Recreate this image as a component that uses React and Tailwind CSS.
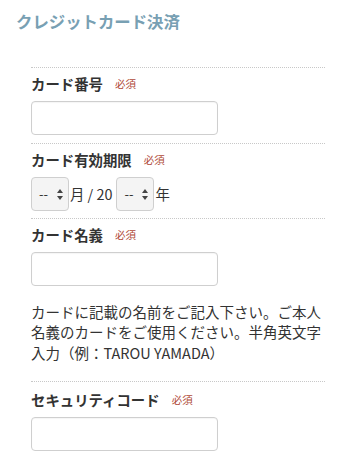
import React from "react";

const FONT = { fontFamily: '"Noto Sans CJK JP", "Noto Sans", sans-serif' };

function Required() {
  return (
    <span className="ml-[12px] text-[10.5px] font-normal text-[#b04a38]">必須</span>
  );
}

function Label({ children }) {
  return (
    <div className="mt-[6px] flex h-[20px] items-center text-[14.4px] font-bold leading-[20px] text-[#333]">
      <span>{children}</span>
      <Required />
    </div>
  );
}

function TextBox() {
  return (
    <div className="mt-[7px] h-[34px] w-[187px] rounded-[4px] border border-[#cfcfcf] bg-white shadow-[inset_0_1px_1px_rgba(0,0,0,0.04)]" />
  );
}

function SelectBox() {
  return (
    <div className="flex h-[34px] w-[38px] items-center justify-between rounded-[4px] border border-[#cfcfcf] bg-[#f4f4f4] pl-[7px] pr-[5px] text-[13px] text-[#333]">
      <span>--</span>
      <svg width="6" height="11" viewBox="0 0 6 11" fill="#444">
        <path d="M3 0 L6 4 L0 4 Z" />
        <path d="M0 7 L6 7 L3 11 Z" />
      </svg>
    </div>
  );
}

function Section({ children }) {
  return <div className="border-t border-dotted border-[#c8c8c8]">{children}</div>;
}

export default function App() {
  return (
    <div className="h-[460px] w-[360px] overflow-hidden bg-white" style={FONT}>
      <div className="pl-[16px] pt-[9px] text-[16.4px] font-bold leading-[24px] text-[#78a0b3]">
        クレジットカード決済
      </div>

      <div className="ml-[31px] mt-[34px] w-[294px]">
        <Section>
          <Label>カード番号</Label>
          <TextBox />
          <div className="h-[8px]" />
        </Section>

        <Section>
          <Label>カード有効期限</Label>
          <div className="mt-[7px] flex items-center text-[14.4px] text-[#333]">
            <SelectBox />
            <span className="ml-[1px]">月 / 20</span>
            <span className="ml-[4px]">
              <SelectBox />
            </span>
            <span className="ml-[1px]">年</span>
          </div>
          <div className="h-[7px]" />
        </Section>

        <Section>
          <Label>カード名義</Label>
          <TextBox />
          <p className="mt-[16px] text-[14.5px] leading-[20.3px] text-[#333]">
            カードに記載の名前をご記入下さい。ご本人名義のカードをご使用ください。半角英文字入力（例：TAROU YAMADA）
          </p>
          <div className="h-[18px]" />
        </Section>

        <Section>
          <div className="h-[2px]" />
          <Label>セキュリティコード</Label>
          <TextBox />
        </Section>
      </div>
    </div>
  );
}
